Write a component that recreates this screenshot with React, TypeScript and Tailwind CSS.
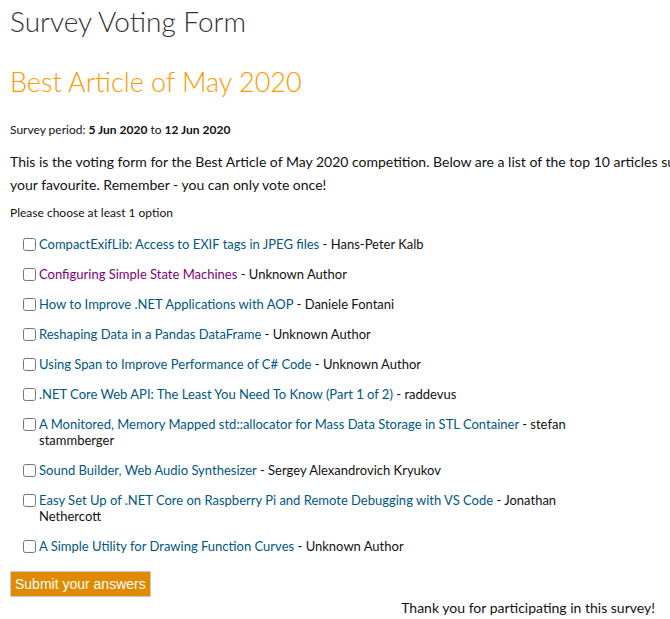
const articles: { title: string; author: string; visited?: boolean }[] = [
  { title: "CompactExifLib: Access to EXIF tags in JPEG files", author: "Hans-Peter Kalb" },
  { title: "Configuring Simple State Machines", author: "Unknown Author", visited: true },
  { title: "How to Improve .NET Applications with AOP", author: "Daniele Fontani" },
  { title: "Reshaping Data in a Pandas DataFrame", author: "Unknown Author" },
  { title: "Using Span to Improve Performance of C# Code", author: "Unknown Author" },
  { title: ".NET Core Web API: The Least You Need To Know (Part 1 of 2)", author: "raddevus" },
  { title: "A Monitored, Memory Mapped std::allocator for Mass Data Storage in STL Container", author: "stefan stammberger" },
  { title: "Sound Builder, Web Audio Synthesizer", author: "Sergey Alexandrovich Kryukov" },
  { title: "Easy Set Up of .NET Core on Raspberry Pi and Remote Debugging with VS Code", author: "Jonathan Nethercott" },
  { title: "A Simple Utility for Drawing Function Curves", author: "Unknown Author" },
];

export default function App() {
  return (
    <div className="w-[760px] pl-[10px] text-[#111] font-['Lato',sans-serif]">
      <h1 className="pt-[4px] text-[28px] leading-[34px] font-light text-[#333]">Survey Voting Form</h1>
      <h2 className="mt-[27px] text-[27px] leading-[34px] font-light text-[#ff9900]">Best Article of May 2020</h2>
      <p className="mt-[22px] text-[12px] leading-[18px]">
        Survey period: <b>5 Jun 2020</b> to <b>12 Jun 2020</b>
      </p>
      <p className="mt-[11px] whitespace-nowrap text-[14px] leading-[23px]">
        This is the voting form for the Best Article of May 2020 competition. Below are a list of the top 10 articles submitted. Please select
        <br />
        your favourite. Remember - you can only vote once!
      </p>
      <p className="mt-[8px] text-[12px] leading-[18px]">Please choose at least 1 option</p>

      <ul className="mt-[14px] w-[565px] pl-[13px] flex flex-col gap-[14px]">
        {articles.map((a, i) => (
          <li key={i} className="flex items-start gap-[3px] text-[13px] leading-[16px]">
            <input type="checkbox" className="mt-[2px] w-[13px] h-[13px] shrink-0" />
            <span>
              <a href="#" className={a.visited ? "text-[#800080]" : "text-[#005782]"}>{a.title}</a> - {a.author}
            </span>
          </li>
        ))}
      </ul>

      <button className="mt-[17px] h-[26px] px-[4px] bg-[#e08a00] border border-[#ccc] text-white text-[14px] font-['Liberation_Sans',sans-serif]">
        Submit your answers
      </button>
      <div className="w-[645px] text-right text-[14px] leading-[18px] mt-[2px]">Thank you for participating in this survey!</div>
    </div>
  );
}
